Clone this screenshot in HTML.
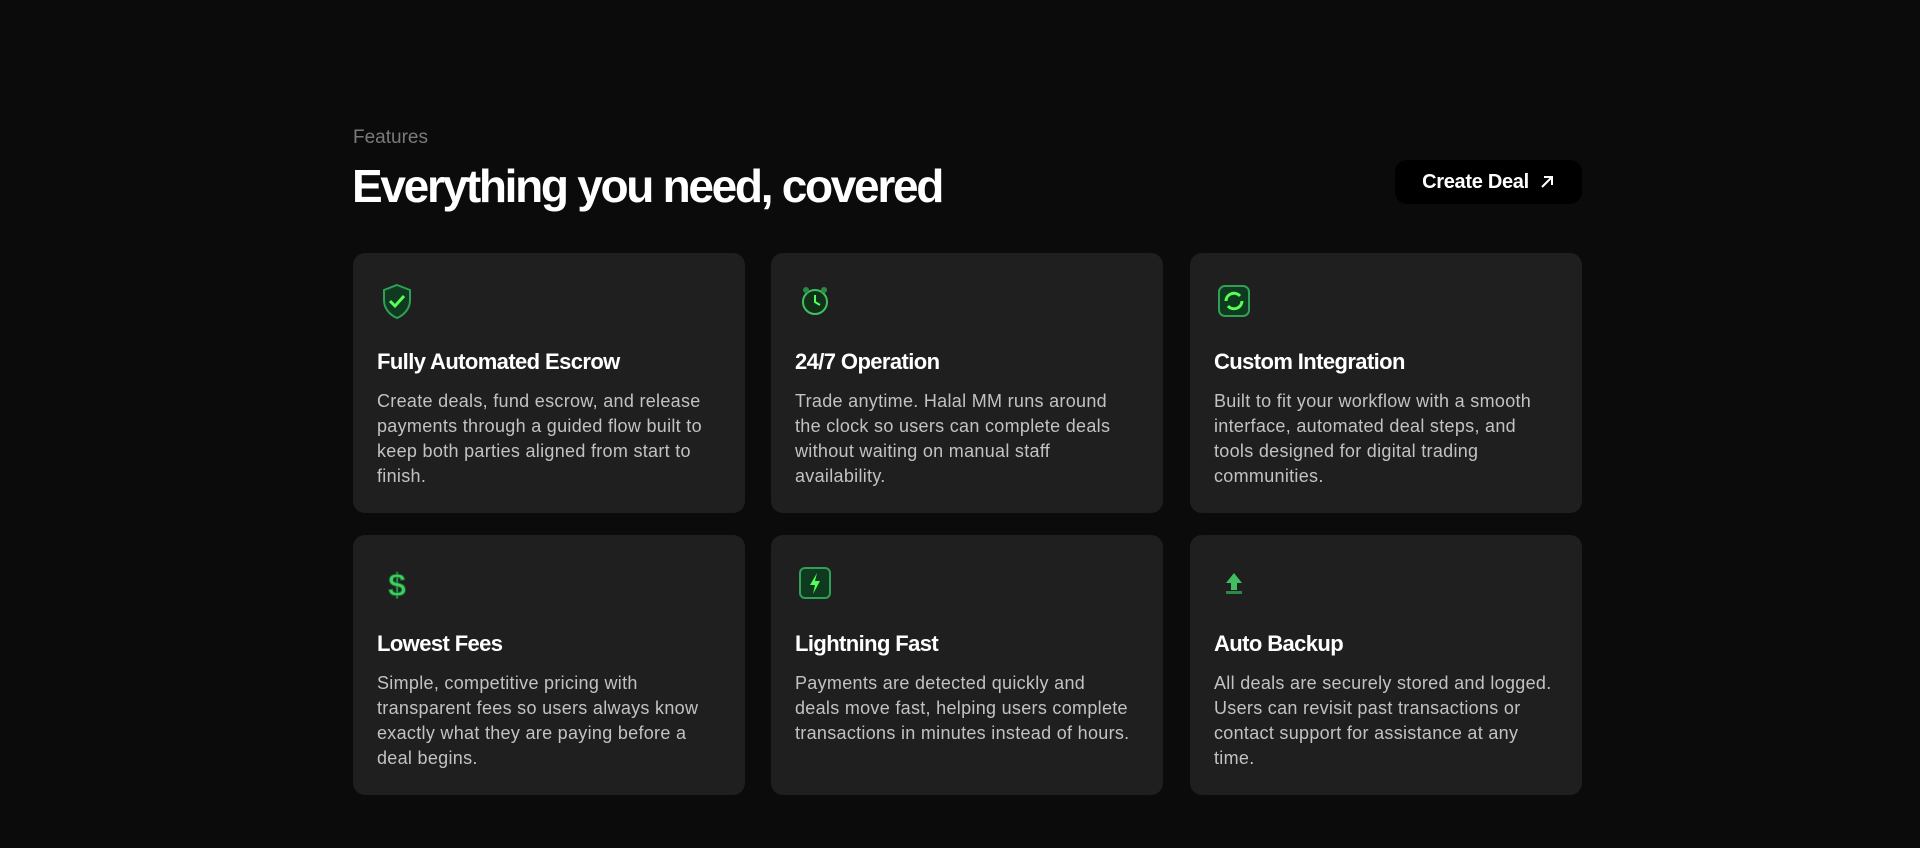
<!DOCTYPE html>
<html><head><meta charset="utf-8"><style>
*{margin:0;padding:0;box-sizing:border-box}
body{width:1920px;height:848px;background:#0b0b0b;font-family:"Liberation Sans",sans-serif;position:relative;overflow:hidden}
.lbl{position:absolute;left:353px;top:127px;font-size:19px;color:#7a7a7a}
h1{position:absolute;left:352px;top:159px;font-size:46px;color:#fff;font-weight:700;letter-spacing:-2.3px}
.btn{position:absolute;left:1395px;top:160px;width:187px;height:44px;background:#000;border-radius:12px;color:#fff;font-size:20px;font-weight:700;display:flex;align-items:center;justify-content:center;gap:10px;letter-spacing:-0.3px}
.card{position:absolute;width:392px;height:260px;background:#1f1f1f;border-radius:12px;padding:0 24px}
.ic{position:absolute;left:24px;top:28px;width:40px;height:40px}
.card h3{position:absolute;left:24px;top:96px;font-size:22px;color:#fff;font-weight:700;letter-spacing:-0.6px}
.card p{position:absolute;left:24px;top:136px;white-space:nowrap;font-size:18px;line-height:25px;color:#c2c2c2;letter-spacing:0.3px}
</style></head><body>
<div class="lbl">Features</div>
<h1>Everything you need, covered</h1>
<div class="btn">Create Deal <svg width="16" height="16" viewBox="0 0 16 16"><path d="M3 13L13 3M5 3h8v8" stroke="#fff" stroke-width="2" fill="none"/></svg></div>

<div class="card" style="left:353px;top:253px"><svg class="ic" viewBox="0 0 40 40"><path d="M20 4l13 5v10c0 9-6 15-13 18C13 34 7 28 7 19V9z" fill="#0f3a1f" stroke="#2fa055" stroke-width="2"/><path d="M13 20l5 5 9-10" stroke="#5f5" stroke-width="3" fill="none"/></svg><h3>Fully Automated Escrow</h3><p>Create deals, fund escrow, and release<br>payments through a guided flow built to<br>keep both parties aligned from start to<br>finish.</p></div>
<div class="card" style="left:771px;top:253px"><svg class="ic" viewBox="0 0 40 40"><circle cx="20" cy="21" r="12" fill="#10301a" stroke="#3fbf60" stroke-width="2"/><path d="M20 14v7l5 3" stroke="#5f5" stroke-width="2" fill="none"/><circle cx="11" cy="9" r="3" fill="#2a8a45"/><circle cx="29" cy="9" r="3" fill="#2a8a45"/></svg><h3>24/7 Operation</h3><p>Trade anytime. Halal MM runs around<br>the clock so users can complete deals<br>without waiting on manual staff<br>availability.</p></div>
<div class="card" style="left:1190px;top:253px"><svg class="ic" viewBox="0 0 40 40"><rect x="5" y="5" width="30" height="30" rx="6" fill="#0f3a1f" stroke="#2fa055" stroke-width="2"/><path d="M12 20a8 8 0 0114-5M28 20a8 8 0 01-14 5" stroke="#5f5" stroke-width="3" fill="none"/></svg><h3>Custom Integration</h3><p>Built to fit your workflow with a smooth<br>interface, automated deal steps, and<br>tools designed for digital trading<br>communities.</p></div>

<div class="card" style="left:353px;top:535px"><svg class="ic" viewBox="0 0 40 40"><text x="20" y="33" text-anchor="middle" font-family="Liberation Sans" font-weight="700" font-size="32" fill="#3fcf60" stroke="#1a6030" stroke-width="1">$</text></svg><h3>Lowest Fees</h3><p>Simple, competitive pricing with<br>transparent fees so users always know<br>exactly what they are paying before a<br>deal begins.</p></div>
<div class="card" style="left:771px;top:535px"><svg class="ic" viewBox="0 0 40 40"><rect x="5" y="5" width="30" height="30" rx="5" fill="#0f3a1f" stroke="#2fa055" stroke-width="2"/><path d="M22 10l-7 12h5l-2 9 7-13h-5z" fill="#5f5"/></svg><h3>Lightning Fast</h3><p>Payments are detected quickly and<br>deals move fast, helping users complete<br>transactions in minutes instead of hours.</p></div>
<div class="card" style="left:1190px;top:535px"><svg class="ic" viewBox="0 0 40 40"><path d="M20 10l8 10h-5v7h-6v-7h-5z" fill="#3fbf60"/><rect x="12" y="28" width="16" height="3" fill="#2a8a45"/></svg><h3>Auto Backup</h3><p>All deals are securely stored and logged.<br>Users can revisit past transactions or<br>contact support for assistance at any<br>time.</p></div>
</body></html>
